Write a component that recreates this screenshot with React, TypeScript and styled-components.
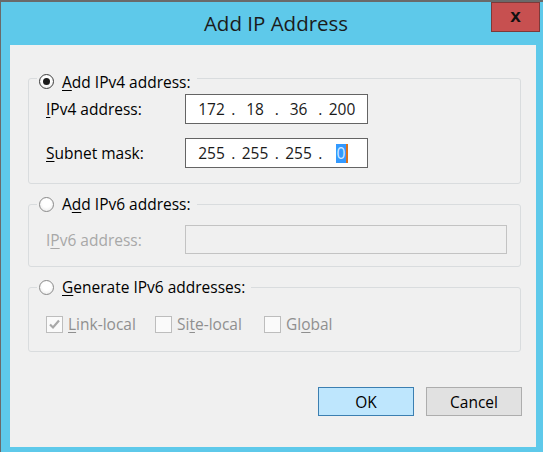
import React from 'react';
import styled, { createGlobalStyle, css } from 'styled-components';

const GlobalStyle = createGlobalStyle`
  html, body { margin: 0; padding: 0; background: #ffffff; }
  body { font-family: "Open Sans", "Noto Sans", sans-serif; }
  * { box-sizing: border-box; }
`;

const FONT = `"Open Sans", "Noto Sans", sans-serif`;
const TEXT_SIZE = '15.5px';

const Window = styled.div`
  width: 543px;
  height: 452px;
  background: #5ec9ea;
  border-top: 2px solid #6a6a6a;
  border-left: 1px solid #6a6a6a;
  display: flex;
  flex-direction: column;
  font-family: ${FONT};
`;

const TitleBar = styled.div`
  height: 43px;
  flex: none;
  display: grid;
  grid-template-columns: 1fr auto 1fr;
  padding-left: 8px;
`;

const Title = styled.h1`
  grid-column: 2;
  margin: 0;
  font-size: 20.5px;
  font-weight: 400;
  line-height: 43px;
  color: #1b1b1b;
`;

const CloseButton = styled.button`
  grid-column: 3;
  justify-self: end;
  align-self: start;
  width: 49px;
  height: 30px;
  margin-right: 3px;
  padding: 0 0 4px;
  background: #c75050;
  border: 1px solid #7d3939;
  color: #111111;
  font: 700 19px/1 "Liberation Sans", Arial, sans-serif;
`;

const Client = styled.div`
  flex: 1;
  margin: 0 7px 5px 9px;
  background: #f0f0f0;
  padding: 23px 15px 31px 18px;
  display: flex;
  flex-direction: column;
  gap: 10px;
`;

const Group = styled.fieldset`
  margin: 0;
  padding: 0;
  min-width: 0;
  border: 1px solid #d9dcde;
  border-radius: 3px;
`;

const Legend = styled.legend`
  margin-left: 8px;
  padding: 0 6px 0 2px;
  height: 20px;
`;

const LegendLabel = styled.label`
  display: inline-flex;
  align-items: center;
  gap: 8px;
  height: 20px;
  font-size: ${TEXT_SIZE};
  color: #000000;
`;

const GroupBody = styled.div<{ $pt: number; $pb: number }>`
  padding: ${(p) => p.$pt}px 0 ${(p) => p.$pb}px 17px;
  display: flex;
  flex-direction: column;
  gap: 14px;
`;

const FieldRow = styled.div<{ $inputWidth: number }>`
  display: grid;
  grid-template-columns: 139px ${(p) => p.$inputWidth}px;
  align-items: center;
`;

const FieldLabel = styled.span<{ $disabled?: boolean }>`
  font-size: ${TEXT_SIZE};
  color: ${(p) => (p.$disabled ? '#a8a8a8' : '#000000')};
`;

const Key = styled.span`
  text-decoration: underline;
  text-underline-offset: 2px;
`;

const IpBox = styled.div`
  height: 30px;
  border: 1px solid #646464;
  background: #ffffff;
  display: flex;
  align-items: center;
  padding-left: 9px;
  font-size: ${TEXT_SIZE};
  color: #1a1a1a;
`;

const Octet = styled.span`
  width: 33px;
  text-align: center;
`;

const Dot = styled.span`
  width: 10.5px;
  text-align: center;
`;

const Selected = styled.span`
  display: inline-block;
  line-height: 19px;
  padding: 0 1px;
  background: #3399ff;
  color: #d6ebff;
  border-right: 2px solid #d8711e;
`;

const TextBox = styled.div`
  height: 29px;
  border: 1px solid #c3c3c3;
  background: #f0f0f0;
`;

const RadioDot = styled.span<{ $checked?: boolean }>`
  width: 15px;
  height: 15px;
  flex: none;
  border-radius: 50%;
  border: 1px solid ${(p) => (p.$checked ? '#3e3e3e' : '#8a8a8a')};
  background: radial-gradient(circle at 50% 40%, #ffffff 40%, #e4e4e4 100%);
  display: flex;
  align-items: center;
  justify-content: center;
  ${(p) =>
    p.$checked &&
    css`
      &::after {
        content: '';
        width: 7px;
        height: 7px;
        border-radius: 50%;
        background: #1a1a1a;
      }
    `}
`;

const CheckRow = styled.div`
  display: grid;
  grid-template-columns: repeat(3, 109px);
  align-items: center;
  height: 18px;
`;

const CheckItem = styled.label`
  display: flex;
  align-items: center;
  gap: 5px;
  font-size: ${TEXT_SIZE};
  color: #8f8f8f;
`;

const CheckBox = styled.span`
  width: 17px;
  height: 17px;
  flex: none;
  border: 1px solid #bdbdbd;
  background: #fafafa;
  display: flex;
  align-items: center;
  justify-content: center;
`;

const ButtonBar = styled.div`
  margin-top: auto;
  display: flex;
  justify-content: flex-end;
  gap: 12px;
  margin-right: -1px;
`;

const DialogButton = styled.button<{ $primary?: boolean }>`
  width: 96px;
  height: 29px;
  font-family: ${FONT};
  font-size: ${TEXT_SIZE};
  color: #000000;
  padding: 0;
  border: 1px solid ${(p) => (p.$primary ? '#3c7fb1' : '#adadad')};
  background: ${(p) => (p.$primary ? '#bee6fd' : '#e1e1e1')};
`;

const Check = () => (
  <svg width="13" height="13" viewBox="0 0 13 13">
    <path d="M2 6.5 L5 9.5 L11 2.5" fill="none" stroke="#a8a8a8" strokeWidth="2.2" />
  </svg>
);

const IpAddress: React.FC<{ octets: string[]; selectLast?: boolean }> = ({ octets, selectLast }) => (
  <IpBox>
    {octets.map((o, i) => (
      <React.Fragment key={i}>
        {i > 0 && <Dot>.</Dot>}
        <Octet>{selectLast && i === octets.length - 1 ? <Selected>{o}</Selected> : o}</Octet>
      </React.Fragment>
    ))}
  </IpBox>
);

export default function App() {
  return (
    <>
      <GlobalStyle />
      <Window>
        <TitleBar>
          <Title>Add IP Address</Title>
          <CloseButton>x</CloseButton>
        </TitleBar>
        <Client>
          <Group>
            <Legend>
              <LegendLabel>
                <RadioDot $checked />
                <span>
                  <Key>A</Key>dd IPv4 address:
                </span>
              </LegendLabel>
            </Legend>
            <GroupBody $pt={6} $pb={15}>
              <FieldRow $inputWidth={183}>
                <FieldLabel>
                  <Key>I</Key>Pv4 address:
                </FieldLabel>
                <IpAddress octets={['172', '18', '36', '200']} />
              </FieldRow>
              <FieldRow $inputWidth={183}>
                <FieldLabel>
                  <Key>S</Key>ubnet mask:
                </FieldLabel>
                <IpAddress octets={['255', '255', '255', '0']} selectLast />
              </FieldRow>
            </GroupBody>
          </Group>
          <Group>
            <Legend>
              <LegendLabel>
                <RadioDot />
                <span>
                  A<Key>d</Key>d IPv6 address:
                </span>
              </LegendLabel>
            </Legend>
            <GroupBody $pt={11} $pb={12}>
              <FieldRow $inputWidth={322}>
                <FieldLabel $disabled>
                  I<Key>P</Key>v6 address:
                </FieldLabel>
                <TextBox />
              </FieldRow>
            </GroupBody>
          </Group>
          <Group>
            <Legend>
              <LegendLabel>
                <RadioDot />
                <span>
                  <Key>G</Key>enerate IPv6 addresses:
                </span>
              </LegendLabel>
            </Legend>
            <GroupBody $pt={16} $pb={20}>
              <CheckRow>
                <CheckItem>
                  <CheckBox>
                    <Check />
                  </CheckBox>
                  <span>
                    <Key>L</Key>ink-local
                  </span>
                </CheckItem>
                <CheckItem>
                  <CheckBox />
                  <span>
                    Si<Key>t</Key>e-local
                  </span>
                </CheckItem>
                <CheckItem>
                  <CheckBox />
                  <span>
                    Gl<Key>o</Key>bal
                  </span>
                </CheckItem>
              </CheckRow>
            </GroupBody>
          </Group>
          <ButtonBar>
            <DialogButton $primary>OK</DialogButton>
            <DialogButton>Cancel</DialogButton>
          </ButtonBar>
        </Client>
      </Window>
    </>
  );
}
